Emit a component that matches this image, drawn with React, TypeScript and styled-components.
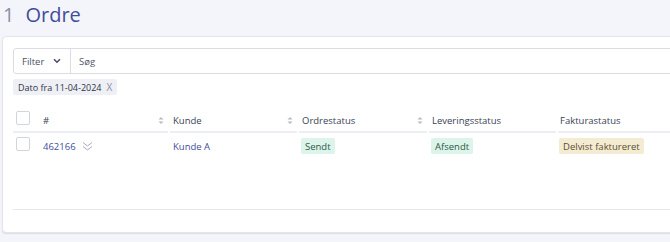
import React from "react";
import styled, { createGlobalStyle } from "styled-components";

const Global = createGlobalStyle`
  html, body { margin: 0; padding: 0; background: #f4f5fa; }
  body { font-family: "Open Sans", "Noto Sans", sans-serif; color: #3a3f55; overflow: hidden; }
  * { box-sizing: border-box; }
`;

const Page = styled.div`
  width: 670px;
  height: 242px;
  padding: 0 0 0 2px;
`;

const Title = styled.h1`
  margin: 0;
  height: 36px;
  padding: 2px 0 0 1px;
  font-size: 20px;
  font-weight: 400;
  line-height: 26px;
  display: flex;
  gap: 11px;
`;

const Count = styled.span`
  color: #8b8fa6;
`;

const TitleText = styled.span`
  color: #3f4d9c;
`;

const Card = styled.div`
  width: 700px;
  height: 197px;
  background: #fff;
  border: 1px solid #e3e4ec;
  border-radius: 4px;
  box-shadow: 0 1px 1px rgba(40, 45, 80, 0.12);
  padding: 11px 0 0 10px;
  display: flex;
  flex-direction: column;
`;

const InputGroup = styled.div`
  display: flex;
  height: 26px;
  border: 1px solid #dcdde3;
  border-radius: 3px;
  width: 680px;
`;

const FilterButton = styled.div`
  width: 57px;
  display: flex;
  align-items: center;
  padding-left: 8px;
  gap: 9px;
  font-size: 9.5px;
  color: #4a4f63;
  border-right: 1px solid #dcdde3;
`;

const Search = styled.div`
  display: flex;
  align-items: center;
  padding-left: 8px;
  font-size: 9.5px;
  color: #55596b;
`;

const Chip = styled.div`
  margin-top: 5px;
  align-self: flex-start;
  height: 16px;
  padding: 0 5px 0 5px;
  background: #eef0f5;
  border-radius: 2px;
  font-size: 9px;
  color: #2f3446;
  display: flex;
  align-items: center;
  gap: 5px;
`;

const ChipX = styled.span`
  color: #8b8fa0;
  font-size: 10px;
`;

const Table = styled.div`
  margin-top: 14px;
  display: grid;
  grid-template-columns: 25px 130px 129px 130px 129px 129px;
  grid-template-rows: 24px 26px;
  width: 673px;
`;

const Cell = styled.div<{ $head?: boolean; $indent?: number; $gap?: boolean }>`
  display: flex;
  align-items: center;
  justify-content: space-between;
  font-size: 9.5px;
  color: ${(p) => (p.$head ? "#3a3f55" : "#3f4d9c")};
  border-bottom: ${(p) => (p.$head ? "2px solid #eceef3" : "none")};
  margin-left: ${(p) => (p.$gap ? "2px" : "0")};
  padding-left: ${(p) => p.$indent ?? 3}px;
  padding-right: 4px;
`;

const CellInner = styled.div`
  display: flex;
  align-items: center;
  gap: 6px;
`;

const Check = styled.div`
  width: 14px;
  height: 14px;
  margin-bottom: 4px;
  border: 1px solid #d3d5dd;
  border-radius: 2px;
  background: #fff;
`;

const Badge = styled.span<{ $tone: "green" | "yellow" }>`
  height: 16px;
  padding: 0 4px;
  margin-left: -1px;
  display: inline-flex;
  align-items: center;
  border-radius: 2px;
  font-size: 9.5px;
  background: ${(p) => (p.$tone === "green" ? "#ddf4ea" : "#f4ebd3")};
  color: ${(p) => (p.$tone === "green" ? "#2f5848" : "#5b4e30")};
`;

const Footer = styled.div`
  margin-top: auto;
  margin-bottom: 22px;
  border-top: 1px solid #e6e7ec;
  width: 680px;
`;

const Sort = () => (
  <svg width="6" height="9" viewBox="0 0 6 9">
    <path d="M0.5 3.6 L3 1 L5.5 3.6 Z" fill="#b7bac6" />
    <path d="M0.5 5.4 L3 8 L5.5 5.4 Z" fill="#b7bac6" />
  </svg>
);

const Chevron = () => (
  <svg width="8" height="6" viewBox="0 0 8 6">
    <path d="M1 1.2 L4 4.2 L7 1.2" fill="none" stroke="#4a4f63" strokeWidth="1.6" />
  </svg>
);

const DoubleChevron = () => (
  <svg width="11" height="11" viewBox="0 0 11 11">
    <path d="M1 1.5 L5.5 5 L10 1.5" fill="none" stroke="#a8acbb" strokeWidth="1" />
    <path d="M1 5.5 L5.5 9 L10 5.5" fill="none" stroke="#a8acbb" strokeWidth="1" />
  </svg>
);

export default function App() {
  return (
    <Page>
      <Global />
      <Title>
        <Count>1</Count>
        <TitleText>Ordre</TitleText>
      </Title>
      <Card>
        <InputGroup>
          <FilterButton>
            Filter <Chevron />
          </FilterButton>
          <Search>Søg</Search>
        </InputGroup>
        <Chip>
          Dato fra 11-04-2024 <ChipX>X</ChipX>
        </Chip>
        <Table>
          <Cell $head>
            <Check />
          </Cell>
          <Cell $head $indent={5}>
            <CellInner>#</CellInner>
            <Sort />
          </Cell>
          <Cell $head $gap>
            <CellInner>Kunde</CellInner>
            <Sort />
          </Cell>
          <Cell $head $gap>
            <CellInner>Ordrestatus</CellInner>
            <Sort />
          </Cell>
          <Cell $head $gap>
            <CellInner>Leveringsstatus</CellInner>
          </Cell>
          <Cell $head $gap $indent={2}>
            <CellInner>Fakturastatus</CellInner>
          </Cell>

          <Cell>
            <Check />
          </Cell>
          <Cell $indent={5}>
            <CellInner>
              462166 <DoubleChevron />
            </CellInner>
          </Cell>
          <Cell $gap>
            <CellInner>Kunde A</CellInner>
          </Cell>
          <Cell $gap>
            <Badge $tone="green">Sendt</Badge>
          </Cell>
          <Cell $gap>
            <Badge $tone="green">Afsendt</Badge>
          </Cell>
          <Cell $gap $indent={2}>
            <Badge $tone="yellow">Delvist faktureret</Badge>
          </Cell>
        </Table>
        <Footer />
      </Card>
    </Page>
  );
}
